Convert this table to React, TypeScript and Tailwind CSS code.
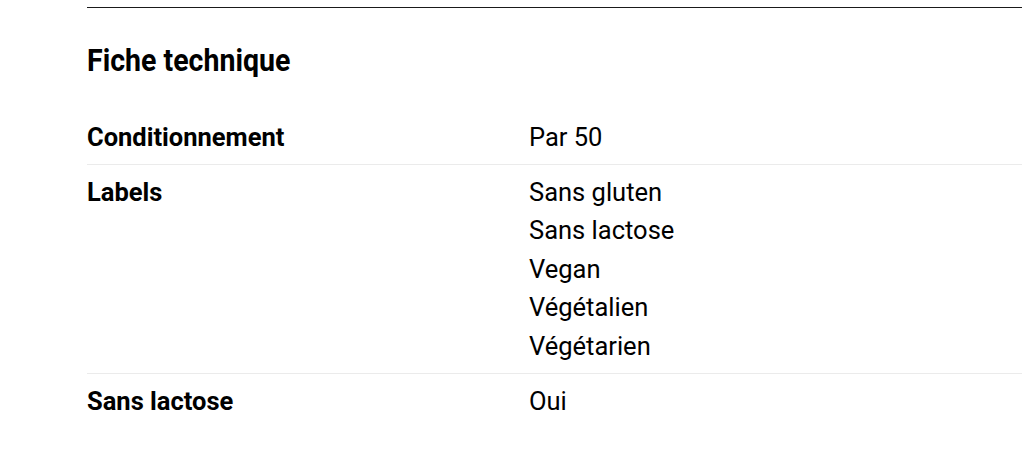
import React from "react";

type Row = {
  label: string;
  values: string[];
};

const rows: Row[] = [
  { label: "Conditionnement", values: ["Par 50"] },
  {
    label: "Labels",
    values: ["Sans gluten", "Sans lactose", "Vegan", "Végétalien", "Végétarien"],
  },
  { label: "Sans lactose", values: ["Oui"] },
];

function App() {
  return (
    <div className="w-full h-[476px] overflow-hidden bg-white font-['Roboto',sans-serif] text-black">
      <div className="ml-[87px] w-[1100px] pt-[7px]">
        <div className="border-t border-[#1a1a1a]" />
        <h2 className="mt-[34px] mb-[30px] text-[31px] leading-[38px] font-bold origin-left scale-x-[0.92]">
          Fiche technique
        </h2>
        <div className="flex flex-col">
          {rows.map((row, i) => (
            <div
              key={row.label}
              className={
                "grid grid-cols-[442px_1fr] pt-[8px] pb-[7px] " +
                (i < rows.length - 1 ? "border-b border-[#ebebeb]" : "")
              }
            >
              <p className="text-[25.5px] leading-[38.6px] font-bold">{row.label}</p>
              <div className="flex flex-col">
                {row.values.map((v) => (
                  <p key={v} className="text-[25.5px] leading-[38.6px]">
                    {v}
                  </p>
                ))}
              </div>
            </div>
          ))}
        </div>
      </div>
    </div>
  );
}

export default App;
